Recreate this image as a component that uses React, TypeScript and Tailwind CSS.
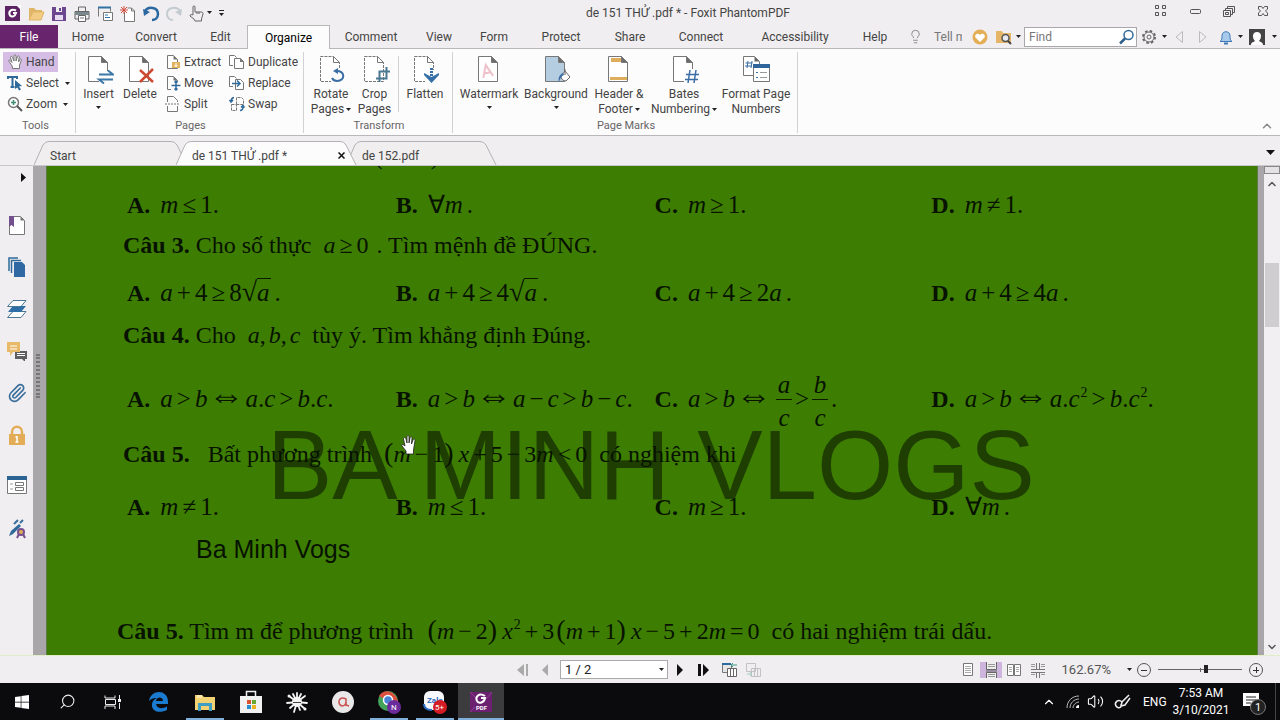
import React from 'react'
import { FaWindows } from 'react-icons/fa'
import { Search, ChevronUp, ChevronDown, Paperclip, Lightbulb, Volume2 } from 'lucide-react'

type Kids = { children?: React.ReactNode }

const Caret = ({ className = '' }: { className?: string }) => (
    <svg className={`shrink-0 ${className}`} width="5" height="3" viewBox="0 0 5 3" aria-hidden="true"><path d="M0 0h5L2.500 3z" fill="#222" /></svg>
)

const Svg = ({ w = 20, h = 20, children }: Kids & { w?: number; h?: number }) => (
    <svg className="shrink-0" width={w} height={h} viewBox={`0 0 ${w} ${h}`} fill="none" aria-hidden="true">{children}</svg>
)

/* quick access bar */
const quickIcons = [
    { name: 'Foxit', icon: <Svg><rect x="2" y="3" width="15" height="15" fill="#5c2362" /><path d="M13 2h5v5z" fill="#fff" /><path d="M13 7.500C8 5 5 9 7 12.500c2 2 5 1 6-2.500H10" stroke="#fff" strokeWidth="2" /></Svg> },
    { name: 'Open', icon: <Svg><path d="M3 17V5h5l2 2h6v3" fill="#dfb567" /><path d="M3 17l4-8h11l-3 8z" fill="#f2cc84" stroke="#dfb567" /></Svg> },
    { name: 'Save', icon: <Svg><path d="M3 4h14v14H3z" fill="#6d4690" /><path d="M7 4h6v5H7z" fill="#efeef0" /><path d="M6 12h8v5H6z" fill="#e6dcef" /><path d="M10 5h2v3h-2z" fill="#6d4690" /></Svg> },
    { name: 'Print', icon: <Svg><path d="M6.500 8V4h7v4M3 8.500h14V16H3z" stroke="#666" /><path d="M3 9h14v3H3z" fill="#7b888d" /><path d="M6.500 12.500h7v6h-7z" fill="#fff" stroke="#666" /><path d="M8 15h4" stroke="#777" /></Svg> },
    { name: 'Email', icon: <Svg><path d="M3.500 13.500v-9h12v4" stroke="#777" /><path d="M3 4.500h13" stroke="#2f72a3" strokeWidth="2" /><path d="M8.500 9.500h9v8h-9z" fill="#fff" stroke="#777" /><path d="M10 14.500h5M10 12h3" stroke="#2f72a3" /></Svg> },
    { name: 'New', icon: <Svg><path d="M6.500 9v9.500h10V8l-3-3h-4" fill="#fff" stroke="#777" /><path d="M13.500 5v3h3" stroke="#777" /><path d="M6 3v8M2 7h8M3 4l6 6M9 4l-6 6" stroke="#d04b3b" /></Svg> },
    { name: 'Undo', icon: <Svg><path d="M4 8c3-5 13-4 13 3 0 4-3 6-6 6" stroke="#2c68a0" strokeWidth="2.500" /><path d="M2 6l1 7 6-4z" fill="#2c68a0" /></Svg> },
    { name: 'Redo', icon: <Svg><path d="M16 8C13 3 3 4 3 11c0 4 3 6 6 6" stroke="#c3cbd1" strokeWidth="2" /><path d="M18 6l-1 7-6-4z" fill="#c3cbd1" /></Svg> },
]

const HandIcon = () => (
    <Svg w={16} h={16}><path d="M4.500 11L2 7.500C1 6 2.500 5.500 3.500 7L5 8.500 3.500 3.500c0-1.500 1.500-1.500 2 0L7 7V2c0-1.500 2-1.500 2 0v5l1.500-4.500c.500-1.200 2-.700 1.700.500L11.500 8l1.300-2.500c.700-1 1.900-.500 1.500.700L12.500 11v3.500h-7V13z" fill="#fff" stroke="#777" /></Svg>
)

const PointIcon = () => (
    <Svg><path d="M6 12V4c0-1.500 2-1.500 2 0v5h6c2 0 2 1 2 2l-1.500 5v2H8l-1-2-4-3c0-2 2-1.500 3-1zM10 9v2M12 9v2" stroke="#666" /></Svg>
)

/* ribbon pieces */
const Small = ({ icon, label, caret, on }: { icon: React.ReactNode; label: string; caret?: boolean; on?: boolean }) => (
    <button className={`flex items-center h-5 gap-[3px] pl-1 pr-1 whitespace-nowrap ${on ? 'bg-[#d5bde6]' : ''}`}>
        {icon}<span>{label}</span>{caret && <Caret className="ml-[3px]" />}
    </button>
)

const Big = ({ icon, label, second, caret, width }: { icon: React.ReactNode; label: string; second?: string; caret?: boolean; width: string }) => (
    <button className={`flex flex-col items-center shrink-0 pt-[2px] whitespace-nowrap leading-[15px] ${width}`}>
        {icon}
        <span className="mt-[3px]">{label}</span>
        {second
            ? <span className="flex items-center gap-[2px]">{second}{caret && <Caret />}</span>
            : caret && <Caret className="mt-1" />}
    </button>
)

const Group = ({ label, children, width }: Kids & { label: string; width: string }) => (
    <section className={`flex flex-col justify-between shrink-0 h-[81px] border-r border-[#d3d1d4] ${width}`}>
        <div className="flex items-start">{children}</div>
        <p className="text-center text-[11px] leading-[14px] text-[#666]">{label}</p>
    </section>
)

const Page28 = ({ children, dashed }: Kids & { dashed?: boolean }) => (
    <Svg w={30} h={30}>
        <path d="M4.500 2.500h13l6 6v19h-19z" fill="#fff" stroke="#777" strokeDasharray={dashed ? '3 1' : undefined} />
        <path d="M17.500 2.500v6h6z" fill={dashed ? '#fff' : '#6d6d6d'} stroke="#777" />
        {children}
    </Svg>
)

const Page16 = ({ children }: Kids) => (
    <Svg w={16} h={16}><path d="M2.500 1.500h6l4 4v9h-10z" fill="#fff" stroke="#777" /><path d="M8.500 1.500v4h4z" fill="#777" />{children}</Svg>
)

const menuTabs = [
    { name: 'Home', width: 'w-[60px]' },
    { name: 'Convert', width: 'w-[76px]' },
    { name: 'Edit', width: 'w-[53px]' },
    { name: 'Organize', width: 'w-[83px]' },
    { name: 'Comment', width: 'w-[82px]' },
    { name: 'View', width: 'w-[54px]' },
    { name: 'Form', width: 'w-[56px]' },
    { name: 'Protect', width: 'w-[78px]' },
    { name: 'Share', width: 'w-[60px]' },
    { name: 'Connect', width: 'w-[82px]' },
    { name: 'Accessibility', width: 'w-[106px]' },
    { name: 'Help', width: 'w-[54px]' },
]

const TitleBar = () => (
    <header className="relative flex items-center h-[25px] pl-[3px]">
        <div className="flex items-center gap-[3px]">
            {quickIcons.map((q) => <button key={q.name} aria-label={q.name}>{q.icon}</button>)}
            <button aria-label="Touch mode" className="flex items-center"><PointIcon /><Caret /></button>
            <button aria-label="Customize" className="ml-1"><Svg w={5} h={6}><path d="M0 .500h5" stroke="#222" /><path d="M0 3h5L2.500 6z" fill="#222" /></Svg></button>
        </div>
        <h1 className="absolute left-[586px] top-1 leading-[18px] whitespace-nowrap">de 151 THỬ .pdf * - Foxit PhantomPDF</h1>
        <div className="ml-auto flex items-center gap-[14px] pr-[7px] pb-1">
            <button aria-label="Full screen" className="ml-1"><Svg><path d="M4.500 4.500h3v3h-3zM11.500 4.500h3v3h-3zM4.500 11.500h3v3h-3zM11.500 11.500h3v3h-3z" stroke="#555" /></Svg></button>
            <button aria-label="Minimize"><Svg><rect x="5.500" y="8.500" width="10" height="4" rx="1" stroke="#555" /></Svg></button>
            <button aria-label="Restore"><Svg><path d="M8.500 7V5.500h7v6H14M6.500 9V7.500h7v6H12M4.500 9.500h7v6h-7zM6.500 11.500h3v2h-3z" stroke="#555" /></Svg></button>
            <button aria-label="Close"><Svg><path d="M5.500 5.500h3l1.500 2 1.500-2h3v2.500L12.500 10l2 2v2.500h-3l-1.500-2-1.500 2h-3V12l2-2-2-2z" stroke="#555" /></Svg></button>
        </div>
    </header>
)

const MenuBar = () => (
    <nav className="flex items-stretch h-[24px] border-b border-[#b9b7ba]">
        <button className="w-[58px] shrink-0 bg-[#68246c] text-white">File</button>
        {menuTabs.map((t) => (
            <button key={t.name} className={`shrink-0 pt-px ${t.width} ${t.name === 'Organize' ? 'bg-[#fdfcfd] border border-b-0 border-[#b9b7ba] -mb-px text-black' : ''}`}>{t.name}</button>
        ))}
        <div className="ml-auto flex items-center pr-[3px]">
            <Lightbulb size={15} strokeWidth={1.3} color="#777" />
            <input aria-label="Tell me what you want to do" placeholder="Tell me" className="ml-[11px] mr-[2px] w-7 bg-transparent placeholder:text-[#777]" />
            <button aria-label="Favourites" className="ml-2"><Svg w={16} h={16}><circle cx="8" cy="8" r="7.500" fill="#e3ae55" /><path d="M8 13L3.500 8.500C2 5.500 6 3 8 6c2-3 6-.500 4.500 2.500z" fill="#fff" /></Svg></button>
            <button aria-label="Search folder" className="ml-2 flex items-center gap-1"><Svg w={16} h={16}><path d="M0 2h6l1 2h8v10H0z" fill="#e5b667" /><circle cx="9.500" cy="9" r="3.500" fill="#e9eaf0" stroke="#555" strokeWidth="1.500" /><path d="M12 12l3 3" stroke="#444" strokeWidth="2" /></Svg><Caret /></button>
            <label className="ml-[3px] flex items-center w-[113px] h-5 bg-white border border-[#a9a7aa] pl-1">
                <input aria-label="Find" placeholder="Find" className="min-w-0 flex-1 placeholder:text-[#777]" />
                <Svg w={18} h={18}><circle cx="10.500" cy="7" r="4.500" stroke="#2f6a9a" strokeWidth="1.500" /><path d="M7 10.500L2 15.500" stroke="#2f5f8a" strokeWidth="2.500" /></Svg>
            </label>
            <button aria-label="Settings" className="ml-1 flex items-center gap-[5px]"><Svg w={16} h={16}><circle cx="8" cy="8" r="6" stroke="#666" strokeWidth="2" strokeDasharray="2.500 2.210" /><circle cx="8" cy="8" r="5" stroke="#666" fill="#f2f0f2" /><circle cx="8" cy="8" r="2" stroke="#666" /></Svg><Caret /></button>
            <button aria-label="Previous" className="ml-2"><Svg w={8} h={14}><path d="M7.500 1.500v11L1 7z" stroke="#bbb" /></Svg></button>
            <button aria-label="Next" className="ml-4"><Svg w={8} h={14}><path d="M.500 1.500v11L7 7z" stroke="#bbb" /></Svg></button>
            <button aria-label="Notifications" className="ml-3 flex items-center gap-[5px]"><Svg w={14} h={16}><path d="M1 12.500c2-1 2-3 2-6 0-5 8-5 8 0 0 3 0 5 2 6z" fill="#a9c9ec" stroke="#3b78b5" /><path d="M5 14.500h4" stroke="#3b78b5" strokeWidth="2" /></Svg><Caret /></button>
            <button aria-label="Account" className="ml-[6px] flex items-center gap-[7px]"><Svg w={16} h={16}><path d="M0 0h16v16H0z" fill="#444" /><path d="M2 16c0-3 3-3 4-4-3-3-3-9 2-9s5 6 2 9c1 1 4 1 4 4z" fill="#fff" /></Svg><Caret /></button>
        </div>
    </nav>
)

const Ribbon = () => (
    <div className="flex bg-[#fdfcfd] border-b border-[#b9b7ba] pt-[3px] h-[87px]">
        <Group label="Tools" width="w-[76px] pr-1">
            <div className="flex flex-col items-start gap-px pl-[3px]">
                <Small on label="Hand" icon={<HandIcon />} />
                <Small caret label="Select" icon={<Svg w={16} h={16}><path d="M1 4V2h9v2M5.500 2v10M3.500 12h4" stroke="#2f6a9a" strokeWidth="2" /><path d="M8 5l7 6-3 .500 2 3-2 1-1.500-3L8 14z" fill="#2f6a9a" /></Svg>} />
                <Small caret label="Zoom" icon={<Svg w={16} h={16}><circle cx="6.500" cy="6.500" r="5" stroke="#777" strokeWidth="1.500" /><path d="M10 10l5 5" stroke="#555" strokeWidth="2" /><path d="M6.500 4v5M4 6.500h5" stroke="#3d8f70" strokeWidth="1.500" /></Svg>} />
            </div>
        </Group>
        <Group label="Pages" width="w-[228px] pl-[2px]">
            <Big caret width="w-[41px]" label="Insert" icon={<Page28><path d="M15 17h15v13H15z" fill="#fdfcfd" /><path d="M15 20.500h14l-5-4M29 25.500H15l5 4" stroke="#3b78a8" strokeWidth="2" /></Page28>} />
            <Big width="w-[42px]" label="Delete" icon={<Page28><path d="M15 16l13 12M28 15L15 28" stroke="#cc4a32" strokeWidth="2.500" /></Page28>} />
            <div className="flex flex-col items-start gap-px w-[64px]">
                <Small label="Extract" icon={<Page16><path d="M7 8h8v6H7z" fill="#e3b25c" /><path d="M11 9v4M9.500 11l1.500 2 1.500-2" stroke="#fff" /></Page16>} />
                <Small label="Move" icon={<Page16><path d="M6 7h10v9H6z" fill="#fdfcfd" /><path d="M11 6v9M6.500 10.500h9M9.500 7.500L11 6l1.500 1.500M9.500 13.500L11 15l1.500-1.500" stroke="#2f6a9a" strokeWidth="1.500" /></Page16>} />
                <Small label="Split" icon={<Svg w={16} h={16}><path d="M2.500 6V.500h6l4 4V6M2.500 10v5.500h10V10" stroke="#777" /><path d="M0 8h15" stroke="#777" strokeDasharray="2 1" /></Svg>} />
            </div>
            <div className="flex flex-col items-start gap-px">
                <Small label="Duplicate" icon={<Svg w={16} h={16}><path d="M4 11.500H.500v-10h5l2 2M5.500 4.500h6l3 3v7h-9z" fill="#fff" stroke="#777" /><path d="M11 4v4h4z" fill="#777" /></Svg>} />
                <Small label="Replace" icon={<Svg w={16} h={16}><path d="M4 11.500H.500v-10h5l2 2M6.500 4.500h5l3 3v7h-8z" fill="#fff" stroke="#777" /><path d="M3 8.500h8M8 5.500l3 3-3 3" stroke="#2f6a9a" strokeWidth="1.500" /></Svg>} />
                <Small label="Swap" icon={<Svg w={16} h={16}><path d="M7.500 8.500V1.500h5l2 2v5zM2.500 8.500h5v6h-5z" stroke="#777" strokeDasharray="3 1" /><path d="M5 1.500C2 2 2 4 2 6M.500 4L2 6l2-2M11 14.500c3 0 3-2 3-4M12 11.500l2-2 1.500 2" stroke="#2f6a9a" strokeWidth="1.500" /></Svg>} />
            </div>
        </Group>
        <Group label="Transform" width="w-[149px] pl-[2px]">
            <Big caret width="w-[50px]" label="Rotate" second="Pages" icon={<Page28 dashed><path d="M15 15h14v15H15z" fill="#fdfcfd" /><path d="M20 17c9-1 10 10 1 10-3 0-4-1-5-3" stroke="#3b6ea5" strokeWidth="2" /><path d="M17 17l5-3v6z" fill="#3b6ea5" /></Page28>} />
            <Big width="w-[37px]" label="Crop" second="Pages" icon={<Page28 dashed><path d="M19.500 28V17.500H30M16 24.500h10.500V13" stroke="#4a7791" strokeWidth="2" /></Page28>} />
            <div className="h-14 mt-1 ml-[5px] border-l border-[#d3d1d4]" />
            <Big width="w-[52px]" label="Flatten" icon={<Page28 dashed><path d="M15 16h14v13H15z" fill="#fdfcfd" /><path d="M21.500 14v10" stroke="#356fa5" strokeWidth="3" strokeDasharray="2 1" /><path d="M14 19l7.500 4 7.500-4v2l-7.500 8L14 21z" fill="#356fa5" /></Page28>} />
        </Group>
        <Group label="Page Marks" width="w-[345px] pl-[2px]">
            <Big caret width="w-[68px]" label="Watermark" icon={<Page28><path d="M8 23l5-12 5 12M10 19h6" stroke="#edc0ca" strokeWidth="2" transform="rotate(-12 13 17)" /></Page28>} />
            <Big caret width="w-[66px]" label="Background" icon={<Page28><path d="M5 3h12v6h6v18H5z" fill="#b5cde0" /><path d="M20 22l4-5 5 6-4 4c-3 0-5-2-5-5z" fill="#fff" stroke="#666" /><path d="M24 21v-6" stroke="#666" /><path d="M18 28c-1-4 0-7 4-9l1 2c-3 1-4 4-5 7z" fill="#3b6ea5" /></Page28>} />
            <Big caret width="w-[60px]" label="Header &" second="Footer" icon={<Page28><path d="M7 4h10v4H7zM6 23h17v3H6z" fill="#dfae5c" /></Page28>} />
            <Big caret width="w-[70px]" label="Bates" second="Numbering" icon={<Page28><path d="M15 15h14v15H15z" fill="#fdfcfd" /><path d="M21 16l-2 13M27 16l-2 13M17 20.500h13M16 25.500h13" stroke="#3b6ea5" strokeWidth="1.500" /></Page28>} />
            <Big width="w-[74px]" label="Format Page" second="Numbers" icon={<Svg w={32} h={30}><path d="M3.500 2.500h11l5 5v14h-16z" fill="#fff" stroke="#777" /><path d="M14.500 2.500v5h5z" fill="#666" /><path d="M8 7l-1 7M12 7l-1 7M5.500 9h7M5 12h7" stroke="#3b6ea5" /><path d="M13.500 10.500h16v17h-16z" fill="#fff" stroke="#777" /><path d="M13 10h17v4H13z" fill="#2f659b" /><path d="M16 18.500h2M16 23.500h2" stroke="#356fa5" /><path d="M20 18.500h7M20 23.500h7" stroke="#999" /></Svg>} />
        </Group>
        <button aria-label="Collapse ribbon" className="ml-auto self-end pr-[6px] pb-[2px]"><ChevronUp size={14} strokeWidth={2.5} color="#888" /></button>
    </div>
)

const DocTab = ({ label, w, active, className }: { label: string; w: number; active?: boolean; className: string }) => (
    <div className={`relative shrink-0 h-6 ${className}`}>
        <svg className="absolute inset-0" width={w} height="24" aria-hidden="true">
            <path d={`M0 24L9 4Q11 .5 15 .5H${w - 17}Q${w - 13} .5 ${w - 11} 4L${w - 1} 24`} fill={active ? '#fdfcfd' : '#f0eeef'} stroke="#b3b1b4" />
        </svg>
        <button className="relative w-full h-full pl-4 pt-[6px] text-left">{label}</button>
        {active && (
            <button aria-label="Close tab" className="absolute right-3 top-[11px]"><Svg w={7} h={7}><path d="M.500.500l6 6M6.500.500l-6 6" stroke="#111" strokeWidth="1.500" /></Svg></button>
        )}
    </div>
)

const DocTabs = () => (
    <div className="flex items-end h-[30px] pl-[34px] border-b border-[#c9c7ca]">
        <DocTab label="Start" w={154} className="w-[154px]" />
        <DocTab label="de 151 THỬ .pdf *" w={181} active className="w-[181px] -ml-3 z-10" />
        <DocTab label="de 152.pdf" w={151} className="w-[151px] -ml-[11px]" />
        <button aria-label="Tab list" className="ml-auto mr-[5px] mb-[10px]"><svg width="9" height="5" aria-hidden="true"><path d="M0 0h9L4.500 5z" fill="#111" /></svg></button>
    </div>
)

const Sidebar = () => (
    <aside className="w-[33px] shrink-0 bg-[#f0eef0]">
        <button aria-label="Expand panel" className="block ml-[21px] mt-[7px]"><svg width="5" height="9" aria-hidden="true"><path d="M0 0l5 4.500L0 9z" fill="#111" /></svg></button>
        <div className="flex flex-col items-center mt-[33px] gap-[22px]">
            <button aria-label="Bookmarks"><Svg><path d="M2.500 1.500h11l4 4v14h-15z" fill="#fff" stroke="#777" /><path d="M13.500 1.500v4h4z" fill="#777" /><path d="M2 1h5v11l-2.500-2L2 12z" fill="#75508f" /></Svg></button>
            <button aria-label="Pages"><Svg><path d="M2 14V1h9M4.500 16V3.500H14" stroke="#2f6a9a" strokeWidth="1.500" /><path d="M7 5h8l3 3v12H7z" fill="#2f68a3" /></Svg></button>
            <button aria-label="Layers"><Svg><path d="M6 1.500h13l-5 6H.500zM6 12.500h13l-5 6H.500z" fill="#fff" stroke="#4a7791" /><path d="M5 8l-4 5h13l5-6h-5l-1 1z" fill="#2f6fa8" /></Svg></button>
            <button aria-label="Comments"><Svg><path d="M8 10h12v8h-2v3l-3-3H8z" fill="#5f5f61" /><path d="M10 14.500h8M10 12.500h8" stroke="#fff" /><path d="M0 1h13v10H6l-3 4v-4H0z" fill="#e8b967" /><path d="M3 5h7M3 8h7" stroke="#fff" /></Svg></button>
            <button aria-label="Attachments"><Paperclip size={20} strokeWidth={2} color="#3a6f9c" /></button>
            <button aria-label="Security"><Svg><path d="M5 10V7c0-7 10-7 10 0v3" stroke="#e3ac57" strokeWidth="2.500" /><path d="M2 9h16v11H2z" fill="#e3ac57" /><path d="M10 11v6M8.500 12h2M8.500 17h3" stroke="#fff" strokeWidth="1.500" /></Svg></button>
        </div>
        <div className="flex flex-col items-center mt-[30px] gap-6">
            <button aria-label="Fields"><Svg><path d="M.500 2.500h19v16H.500z" fill="#fff" stroke="#777" /><path d="M0 1h20v4H0z" fill="#2b6394" /><path d="M3 9h3M3 14h3" stroke="#999" /><path d="M8.500 7.500h8v3h-8zM8.500 12.500h8v3h-8z" stroke="#777" /></Svg></button>
            <button aria-label="Signatures"><Svg><path d="M2 17l2-5 8-7 2 2-8 8z" fill="#2f6a9a" /><path d="M13 4l3-3M7 5l4-4" stroke="#3a6f9c" strokeWidth="2" /><path d="M12 15l-2 4M16 15l2 4" stroke="#75508f" strokeWidth="2" /><circle cx="14" cy="13" r="3" fill="#e3ac57" stroke="#75508f" strokeWidth="2" /></Svg></button>
        </div>
    </aside>
)

/* math helpers */
const Rel = ({ children }: Kids) => <span className="mx-1">{children}</span>
const Iff = () => <span className="mx-px text-[36px] leading-[16px]">⇔</span>
const Paren = ({ children }: Kids) => <span className="mx-[2px]"><span className="text-[28px] leading-none">(</span>{children}<span className="mr-[3px] text-[28px] leading-none">)</span></span>
const Sup = ({ children }: Kids) => <span className="ml-px text-sm leading-none align-[10px]">{children}</span>
const Root = ({ children }: Kids) => <><span className="text-[28px] leading-none">√</span><span className="border-t border-[#0b1a00] italic pr-px">{children}</span></>
const Dot = () => <span className="ml-1">.</span>
const Frac = ({ top, bottom }: { top: string; bottom: string }) => (
    <span className="inline-flex flex-col items-center align-middle mx-[3px] w-4 leading-7 italic">
        <span>{top}</span>
        <span className="w-full border-t border-[#0b1a00] pt-1 text-center">{bottom}</span>
    </span>
)

const Answers = ({ items, className }: { items: React.ReactNode[]; className: string }) => (
    <div className={`grid grid-cols-[269fr_259fr_277fr_326fr] items-center pl-20 whitespace-nowrap ${className}`}>
        {items.map((item, i) => (
            <div key={i} className="flex items-center gap-[10px]">
                <b>{'ABCD'[i]}.</b>
                <span className="text-[25px]">{item}</span>
            </div>
        ))}
    </div>
)

const Document = () => (
    <main className="relative flex-1 overflow-hidden bg-[#3d7e02] border-x border-[#5f7b45] text-[24px] leading-8 text-[#071200] font-['Liberation_Serif',serif]">
        <div className="absolute left-[220px] top-[244px] text-[98px] leading-[110px] whitespace-nowrap text-black/50 font-['Liberation_Sans',sans-serif]">BA MINH VLOGS</div>
        <div className="relative h-8 -mt-[26px] pl-[327px] flex gap-12 text-[26px]"><span>(</span><span>)</span></div>
        <Answers className="h-8 mt-[17px]" items={[
            <><i>m</i><Rel>≤</Rel>1.</>,
            <>∀<i>m</i><Dot /></>,
            <><i>m</i><Rel>≥</Rel>1.</>,
            <><i>m</i><Rel>≠</Rel>1.</>,
        ]} />
        <p className="relative h-8 mt-2 pl-[76px] whitespace-nowrap"><b>Câu 3.</b> Cho số thực &nbsp;<i>a</i><Rel>≥</Rel><span className="mr-1">0</span><Dot /> Tìm mệnh đề ĐÚNG.</p>
        <Answers className="h-8 mt-4" items={[
            <><i>a</i><Rel>+</Rel>4<Rel>≥</Rel>8<Root>a</Root><Dot /></>,
            <><i>a</i><Rel>+</Rel>4<Rel>≥</Rel>4<Root>a</Root><Dot /></>,
            <><i>a</i><Rel>+</Rel>4<Rel>≥</Rel>2<i>a</i><Dot /></>,
            <><i>a</i><Rel>+</Rel>4<Rel>≥</Rel>4<i>a</i><Dot /></>,
        ]} />
        <p className="relative h-8 mt-[10px] pl-[76px] whitespace-nowrap"><b>Câu 4.</b> Cho &nbsp;<i>a</i>,<i className="ml-[3px]">b</i>,<i className="ml-[3px]">c</i>&nbsp; tùy ý. Tìm khẳng định Đúng.</p>
        <Answers className="relative h-14 mt-[14px]" items={[
            <><i>a</i><Rel>&gt;</Rel><i>b</i><Iff /><i>a</i>.<i>c</i><Rel>&gt;</Rel><i>b</i>.<i>c</i>.</>,
            <><i>a</i><Rel>&gt;</Rel><i>b</i><Iff /><i>a</i><Rel>−</Rel><i>c</i><Rel>&gt;</Rel><i>b</i><Rel>−</Rel><i>c</i>.</>,
            <span className="inline-block pt-[6px]"><i>a</i><Rel>&gt;</Rel><i>b</i><Iff /><Frac top="a" bottom="c" />&gt;<Frac top="b" bottom="c" />.</span>,
            <><i>a</i><Rel>&gt;</Rel><i>b</i><Iff /><i>a</i>.<i>c</i><Sup>2</Sup><Rel>&gt;</Rel><i>b</i>.<i>c</i><Sup>2</Sup>.</>,
        ]} />
        <p className="relative h-8 mt-[17px] pl-[76px] whitespace-nowrap"><b>Câu 5.</b> &nbsp; Bất phương trình <span className="ml-1"><Paren><i>m</i><Rel>−</Rel>1</Paren><i>x</i><Rel>+</Rel>5<Rel>−</Rel>3<i>m</i><Rel>&lt;</Rel>0</span>&nbsp; có nghiệm khi</p>
        <Answers className="relative h-8 mt-[21px]" items={[
            <><i>m</i><Rel>≠</Rel>1.</>,
            <><i>m</i><Rel>≤</Rel>1.</>,
            <><i>m</i><Rel>≥</Rel>1.</>,
            <>∀<i>m</i><Dot /></>,
        ]} />
        <p className="relative h-8 mt-[10px] pl-[149px] text-[25px] font-['Liberation_Sans',sans-serif]">Ba Minh Vogs</p>
        <p className="relative h-8 mt-[50px] pl-[70px] whitespace-nowrap"><b>Câu 5.</b> Tìm m để phương trình <span className="ml-[6px]"><Paren><i>m</i><Rel>−</Rel>2</Paren><i>x</i><Sup>2</Sup><Rel>+</Rel>3<Paren><i>m</i><Rel>+</Rel>1</Paren><i>x</i><Rel>−</Rel>5<Rel>+</Rel>2<i>m</i><Rel>=</Rel>0</span>&nbsp; có hai nghiệm trái dấu.</p>
        {/* hand cursor */}
        <svg className="absolute left-[354px] top-[269px]" width="16" height="20" viewBox="0 0 16 20" aria-hidden="true">
            <path d="M5 19v-3L1 11C0 9 2 9 4 11L2.500 4c0-2 2-2 2.500 0l1 4V2c0-2 2-2 2 0v6l1-5c.500-2 2-1.500 2 0l-.500 6 1.500-4c.700-1.500 2-1 2 .500L12.500 15v4z" fill="#fff" stroke="#222" strokeWidth=".8" />
        </svg>
    </main>
)

const Scrollbar = () => (
    <div className="flex flex-col items-center w-4 shrink-0 bg-[#f1eff1]">
        <div className="w-4 h-2 border border-[#888] bg-[#e4e2e4]" />
        <button aria-label="Scroll up" className="mt-1"><ChevronUp size={12} strokeWidth={3} color="#555" /></button>
        <div className="mt-[73px] w-[14px] h-16 bg-[#cfcdd0]" />
        <button aria-label="Scroll down" className="mt-auto mb-[2px]"><ChevronDown size={12} strokeWidth={3} color="#555" /></button>
    </div>
)

const StatusBar = () => (
    <footer className="flex items-center h-7 pl-[40%] pr-4 border-t border-[#dfeec9] bg-[#f0eef0]">
        <button aria-label="First page" className="ml-[5px]"><Svg w={12} h={12}><path d="M7 0v12L0 6zM9 0h2v12H9z" fill="#aaa" /></Svg></button>
        <button aria-label="Previous page" className="ml-3"><Svg w={8} h={12}><path d="M7 0v12L1 6z" fill="#aaa" /></Svg></button>
        <div className="relative ml-[11px] w-[108px]">
            <select aria-label="Page" className="block w-full h-[19px] appearance-none border border-[#aaa] bg-white pl-1 text-[13px] leading-[15px] text-[#222]">
                <option>1 / 2</option>
            </select>
            <Caret className="absolute right-1 top-2" />
        </div>
        <button aria-label="Next page" className="ml-2"><Svg w={8} h={12}><path d="M1 0v12l6-6z" fill="#111" /></Svg></button>
        <button aria-label="Last page" className="ml-[14px]"><Svg w={12} h={12}><path d="M5 0v12l6-6zM0 0h3v12H0z" fill="#111" /></Svg></button>
        <button aria-label="Previous view" className="ml-3"><Svg w={16} h={16}><path d="M.500 2.500h9v8h-9z" fill="#e6e6e6" stroke="#777" /><path d="M0 2h9" stroke="#2f6a9a" strokeWidth="2" /><path d="M5.500 6.500h9v8h-9zM8.500 6v9M11.500 6v9" fill="#fff" stroke="#666" /><path d="M15 3H9M11 1L9 3l2 2" stroke="#3d9a80" /></Svg></button>
        <button aria-label="Next view" className="ml-2"><Svg w={16} h={16}><path d="M.500 1.500h9v8h-9zM5.500 6.500h9v8h-9zM8.500 6v9M11.500 6v9" stroke="#c3c1c4" /><path d="M1 12h5M4 10l2 2-2 2" stroke="#a5c9bd" /></Svg></button>
        <div className="ml-auto flex items-center">
            <button aria-label="Single page" className="px-1"><Svg w={16} h={16}><path d="M3.500 1.500h9v12h-9z" fill="#fff" stroke="#777" /><path d="M5 4.500h6M5 6.500h6M5 8.500h6M5 10.500h6" stroke="#aaa" /></Svg></button>
            <button aria-label="Continuous" className="px-[3px] bg-[#cdb5dd]"><Svg w={16} h={16}><path d="M3.500 0v7.500h10V0M3.500 16v-5.500h10V16" fill="#eee" stroke="#666" /><path d="M3 9h11" stroke="#666" /><path d="M5 2.500h7M5 4.500h7M5 12.500h7M5 14.500h7" stroke="#999" /></Svg></button>
            <button aria-label="Facing" className="px-1"><Svg w={16} h={16}><path d="M1.500 2.500h6v11h-6zM8.500 2.500h6v11h-6z" fill="#fff" stroke="#777" /><path d="M3 5.500h3M3 7.500h3M3 9.500h3M10 5.500h3M10 7.500h3M10 9.500h3" stroke="#aaa" /></Svg></button>
            <button aria-label="Continuous facing" className="px-1"><Svg w={16} h={16}><path d="M6.500 1v6M9.500 1v6M6.500 10v6M9.500 10v6M1 7.500h14M1 10.500h14" stroke="#777" /><path d="M1 2.500h4M1 4.500h4M11 2.500h4M11 4.500h4M1 12.500h4M11 12.500h4" stroke="#999" /></Svg></button>
            <button className="ml-3 flex items-center gap-4 text-[13px] text-[#555]">162.67%<Caret /></button>
            <button aria-label="Zoom out" className="ml-1"><Svg w={16} h={16}><circle cx="8" cy="8" r="6.500" stroke="#555" /><path d="M5 8.500h6" stroke="#333" /></Svg></button>
            <div className="relative mx-[6px] flex items-center">
                <input type="range" aria-label="Zoom" min={0} max={100} defaultValue={58} className="w-[84px] h-3 appearance-none bg-transparent [&::-webkit-slider-runnable-track]:h-px [&::-webkit-slider-runnable-track]:bg-[#666] [&::-webkit-slider-thumb]:appearance-none [&::-webkit-slider-thumb]:w-1 [&::-webkit-slider-thumb]:h-2 [&::-webkit-slider-thumb]:-mt-1 [&::-webkit-slider-thumb]:bg-[#222]" />
                <span className="absolute left-1/2 top-1 h-1 w-px bg-[#666]" />
            </div>
            <button aria-label="Zoom in"><Svg w={16} h={16}><circle cx="8" cy="8" r="6.500" stroke="#555" /><path d="M5 8.500h6M8.500 5v6" stroke="#333" /></Svg></button>
        </div>
    </footer>
)

const apps = [
    { name: 'Start', icon: <FaWindows size={16} color="#fff" /> },
    { name: 'Search', icon: <Search size={17} strokeWidth={1.5} color="#eee" className="-scale-x-100" /> },
    { name: 'Task view', icon: <Svg w={18} h={18}><path d="M1 2.500V5h10V2.500M1 16v-3h10v3M1.500 6.500h10v5h-10zM15.500 2v4M15.500 10v6" stroke="#eee" /><path d="M14 6h3v3h-3z" fill="#eee" /></Svg> },
    { name: 'Edge', icon: <Svg><path d="M0 9C2-3 19-3 19 10v2H7c1 5 7 5 11 2.500V18C10 22 2 19 3 12c.500-3 2-5 5-6-3 0-5 0-8 3zM7 9h7c-.500-5-6.500-4-7 0z" fill="#1b7bd0" /></Svg> },
    { name: 'File Explorer', open: true, icon: <Svg><path d="M0 3h7l2 2h11v13H0z" fill="#f2d273" /><path d="M2 3h5v3H2z" fill="#fae9a9" /><path d="M3 19v-8h14v8h-3v-5H6v5z" fill="#3f9ec4" /></Svg> },
    { name: 'Store', icon: <Svg w={22} h={24}><path d="M0 6h22v17H0z" fill="#f1f1f1" /><path d="M6.500 6V1.500h9V6" stroke="#f1f1f1" strokeWidth="1.500" /><path d="M7 10h4v4H7z" fill="#d9532c" /><path d="M12 10h4v4h-4z" fill="#6aa632" /><path d="M7 15h4v4H7z" fill="#2c8fd0" /><path d="M12 15h4v4h-4z" fill="#eeb21f" /></Svg> },
    { name: 'Viewer', icon: <Svg w={22} h={22}><circle cx="11" cy="11" r="5" fill="#f4f4f4" /><path d="M11 11V2M11 11l4-8M11 11l8-6M11 11l10 1M11 11l8 7M11 11l3 8M11 11l-3 10M11 11l-7 6M11 11L1 12M11 11L3 5M11 11L7 3" stroke="#f4f4f4" strokeWidth="1.800" strokeLinecap="round" /><circle cx="3" cy="5" r="1.500" fill="#f4f4f4" /><circle cx="19" cy="18" r="1.500" fill="#f4f4f4" /><path d="M7 11.500h8" stroke="#444" /></Svg> },
    { name: 'Ashampoo', icon: <Svg w={24} h={24}><circle cx="12" cy="12" r="11" fill="#e9e7e7" /><path d="M15 16V9c-8-4-9 6-4 7 3 0 4-3 4-5v4l3 1" stroke="#c85252" strokeWidth="1.500" /></Svg> },
    { name: 'Chrome', open: true, icon: <Svg w={24} h={24}><circle cx="11" cy="11" r="10" fill="#44a35a" /><path d="M11 11L2 6c4-7 15-7 19 5z" fill="#db5040" /><path d="M11 11h10c0 6-4 10-9 10z" fill="#f0c34a" /><circle cx="11" cy="10" r="4.500" fill="#4a83d4" stroke="#fff" strokeWidth="1.500" /><circle cx="17" cy="17" r="7" fill="#6c2b9b" /><text x="14" y="20" fontSize="8" fill="#fff">N</text></Svg> },
    { name: 'Zalo', open: true, icon: <Svg w={24} h={24}><rect x="1" y="1" width="20" height="19" rx="6" fill="#f7f9fc" /><path d="M1 14c0 4 3 6 8 6" stroke="#2f6fc5" strokeWidth="2" /><text x="4" y="13" fontSize="8" fontWeight="bold" fill="#2966bc">Zalo</text><circle cx="17" cy="17" r="7" fill="#d51c25" /><text x="12" y="20" fontSize="8" fill="#fff">5+</text></Svg> },
    { name: 'Foxit PhantomPDF', open: true, active: true, icon: <Svg w={22} h={22}><path d="M0 1h22v20H0z" fill="#6c2070" /><path d="M0 1l7 7M22 1l-6 7M0 21l5-5" stroke="#8d4291" /><path d="M15 5C9 1 5 6 7 10c2 3 7 2 8-3h-4" stroke="#fff" strokeWidth="2" /><text x="6" y="19" fontSize="6" fontWeight="bold" fill="#fff">PDF</text></Svg> },
]

const Taskbar = () => (
    <div className="flex items-stretch h-[37px] bg-[#0b0b0d] text-white">
        {apps.map((a) => (
            <button key={a.name} aria-label={a.name} className={`relative flex items-center justify-center shrink-0 ${a.name === 'Start' ? 'w-11' : 'w-[46px]'} ${a.active ? 'bg-[#3c3b3e]' : ''}`}>
                {a.icon}
                {a.open && <span className={`absolute bottom-0 h-[2px] bg-[#7fb0dc] ${a.active ? 'inset-x-0' : 'inset-x-1'}`} />}
            </button>
        ))}
        <div className="ml-auto flex items-center">
            <ChevronUp size={14} strokeWidth={2} />
            <span className="ml-[9px]"><Svg w={16} h={16}><path d="M2 14C2 7 7 2 14 2M5 14c0-5 4-9 9-9M8 14c0-3 3-6 6-6" stroke="#bbb" /><path d="M11 14c0-2 1-3 3-3v3z" fill="#fff" /></Svg></span>
            <Volume2 size={17} strokeWidth={1.5} className="ml-[6px]" />
            <span className="ml-[9px]"><Svg w={18} h={18}><path d="M16 2L9 9l-1 4 4-1 5-7M9 9C5 5 1 10 3 13s6 2 5-2" stroke="#eee" strokeWidth="1.500" /></Svg></span>
            <span className="ml-3 w-[22px]">ENG</span>
            <div className="ml-3 w-12 flex flex-col items-center leading-[17px] whitespace-nowrap"><span>7:53 AM</span><span>3/10/2021</span></div>
            <button aria-label="Notifications" className="ml-[18px] relative"><Svg w={24} h={26}><path d="M0 4h16v13h-4v3l-3-3H0z" fill="#fff" /><path d="M3 8h10M3 11h10M3 14h5" stroke="#222" /><circle cx="15" cy="18" r="7.500" fill="#222" stroke="#777" /><text x="12" y="22" fontSize="11" fill="#fff">1</text></Svg></button>
            <span className="ml-2 mr-1 h-full w-px bg-[#444]" />
        </div>
    </div>
)

const App = () => {
    return (
        <div className="flex flex-col h-screen overflow-hidden bg-[#f0eef0] text-[12px] text-[#444] font-['Roboto',sans-serif]">
            <TitleBar />
            <MenuBar />
            <Ribbon />
            <DocTabs />
            <div className="flex flex-1 min-h-0">
                <Sidebar />
                <div className="flex items-center w-[13px] shrink-0 bg-[#a8a6a9]">
                    <div className="ml-[3px] mb-[70px] h-11 w-[4px] border-x-2 border-dotted border-[#777]" />
                </div>
                <Document />
                <div className="w-[6px] shrink-0 bg-[#a8a6a9]" />
                <Scrollbar />
            </div>
            <StatusBar />
            <Taskbar />
        </div>
    )
}

export default App
